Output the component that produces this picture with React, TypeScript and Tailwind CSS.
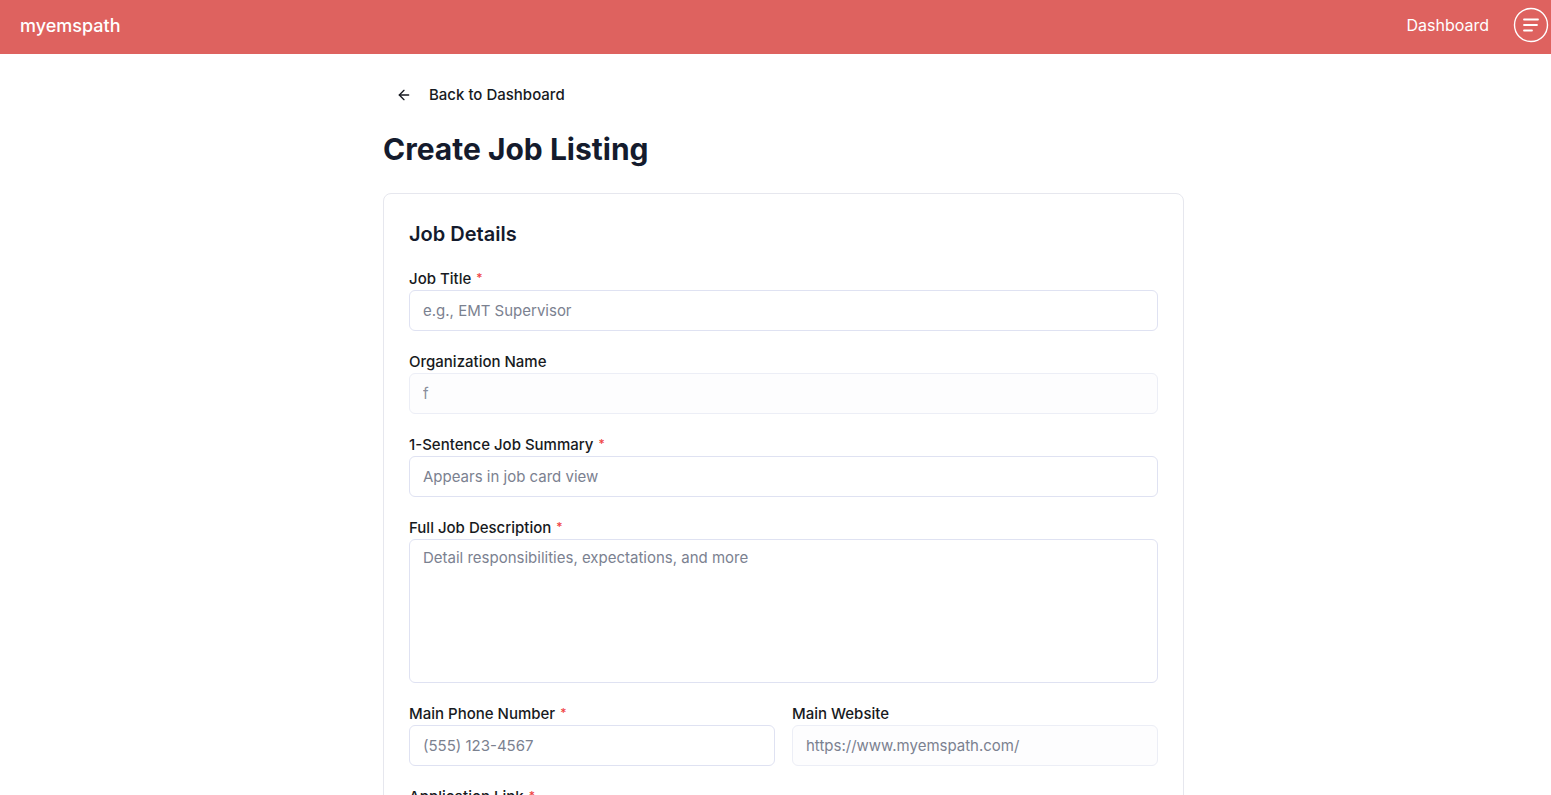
import React from 'react';
import { ArrowLeft } from 'lucide-react';

const FONT = { fontFamily: 'Inter, "Noto Sans", sans-serif' };

const inputBase =
  'block w-full h-[41px] rounded-[6px] border px-[13px] text-[15px] outline-none placeholder:text-[#7b8190]';

const Label: React.FC<{ text: string; required?: boolean }> = ({ text, required }) => (
  <label className="block h-[22px] text-[15px] leading-[22px] font-[450] text-[#171a21]">
    {text}
    {required && (
      <span className="relative -top-[2px] ml-[5px] text-[12px] leading-none text-[#ef4444]">*</span>
    )}
  </label>
);

const MenuIcon = () => (
  <svg width="36" height="36" viewBox="0 0 36 36" fill="none">
    <circle cx="18" cy="18" r="16.5" stroke="white" strokeWidth="1.4" />
    <path d="M11 12.5h14M11 18h13M11 23.5h8" stroke="white" strokeWidth="1.8" strokeLinecap="round" />
  </svg>
);

export default function App() {
  return (
    <div className="min-h-screen bg-white" style={FONT}>
      <header className="h-[54px] bg-[#de625f] flex items-center justify-between pl-5 pr-[2px] pb-[4px]">
        <span className="text-white text-[18px] font-medium">myemspath</span>
        <div className="flex items-center gap-[24px]">
          <span className="text-white text-[16px]">Dashboard</span>
          <MenuIcon />
        </div>
      </header>

      <main className="pl-[383px] pt-[31px]">
        <div className="w-[801px]">
          <button className="flex items-center h-5 pl-[13px] gap-[17px] text-[15px] font-[450] text-[#171a21]">
            <ArrowLeft className="w-4 h-4" strokeWidth={2} />
            <span>Back to Dashboard</span>
          </button>

          <h1 className="mt-[26px] text-[30px] leading-[36px] font-bold text-[#141b2d]">
            Create Job Listing
          </h1>

          <div className="mt-[26px] rounded-[8px] border border-[#e6e7ee] px-[25px] pt-[26px] pb-8">
            <h2 className="text-[20px] leading-[28px] font-semibold text-[#141b2d] mb-5">Job Details</h2>

            <div className="flex flex-col gap-5">
              <div>
                <Label text="Job Title" required />
                <input className={`${inputBase} border-[#dfe2f2] bg-white`} placeholder="e.g., EMT Supervisor" />
              </div>

              <div>
                <Label text="Organization Name" />
                <input
                  className={`${inputBase} border-[#eceef6] bg-[#fdfdfe] text-[#8a8f9c]`}
                  value="f"
                  disabled
                  readOnly
                />
              </div>

              <div>
                <Label text="1-Sentence Job Summary" required />
                <input className={`${inputBase} border-[#dfe2f2] bg-white`} placeholder="Appears in job card view" />
              </div>

              <div>
                <Label text="Full Job Description" required />
                <textarea
                  className="block w-full h-[144px] resize-none rounded-[6px] border border-[#dfe2f2] px-[13px] py-[7px] text-[15px] leading-[22px] outline-none placeholder:text-[#7b8190]"
                  placeholder="Detail responsibilities, expectations, and more"
                />
              </div>

              <div className="grid grid-cols-2 gap-[17px]">
                <div>
                  <Label text="Main Phone Number" required />
                  <input className={`${inputBase} border-[#dfe2f2] bg-white`} placeholder="(555) 123-4567" />
                </div>
                <div>
                  <Label text="Main Website" />
                  <input
                    className={`${inputBase} border-[#eceef6] bg-[#fdfdfe] text-[#7b8190]`}
                    value="https://www.myemspath.com/"
                    disabled
                    readOnly
                  />
                </div>
              </div>

              <div>
                <Label text="Application Link" required />
                <input className={`${inputBase} border-[#dfe2f2] bg-white`} placeholder="https://" />
              </div>
            </div>
          </div>
        </div>
      </main>
    </div>
  );
}
